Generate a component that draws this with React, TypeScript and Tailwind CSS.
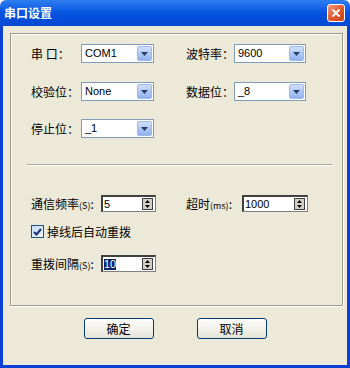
import React from 'react';

const font = "font-['SimSun','Noto_Sans_CJK_SC',sans-serif]";

const DropArrow: React.FC = () => (
    <div className="w-[15px] h-[15px] rounded-[2px] border border-[#9fb8e8] bg-gradient-to-b from-[#cfe0fc] to-[#8fb2ef] flex items-center justify-center">
        <svg width="7" height="4" viewBox="0 0 7 4"><path d="M0 0h7L3.5 4z" fill="#2d3f66" /></svg>
    </div>
);

const Combo: React.FC<{ value: string, width: string }> = ({ value, width }) => (
    <div className={`${width} h-[19px] bg-white border border-[#7f9db9] flex items-center justify-between pl-[3px] pr-[1px]`}>
        <span className="text-[11px] font-['Liberation_Sans',sans-serif] text-black leading-none">{value}</span>
        <DropArrow />
    </div>
);

const Spin: React.FC<{ value: string, width: string, selected?: boolean }> = ({ value, width, selected }) => (
    <div className={`${width} h-[17px] bg-white border-t-[2px] border-l-[2px] border-b border-r border-t-[#404040] border-l-[#404040] border-b-[#808080] border-r-[#808080] flex items-center justify-between pl-[1px] pr-[2px]`}>
        <span className={`text-[11px] font-['Liberation_Sans',sans-serif] leading-none ${selected ? 'bg-[#0a246a] text-white' : 'text-black'}`}>{value}</span>
        <div className="w-[11px] h-[12px] border border-[#404040] bg-[#d4d0c8] flex flex-col items-center justify-center gap-[2px]">
            <svg width="5" height="3" viewBox="0 0 5 3"><path d="M2.5 0L5 3H0z" fill="#000" /></svg>
            <svg width="5" height="3" viewBox="0 0 5 3"><path d="M0 0h5L2.5 3z" fill="#000" /></svg>
        </div>
    </div>
);

const Label: React.FC<{ children: React.ReactNode, width: string }> = ({ children, width }) => (
    <span className={`${width} text-[12px] text-black leading-none`}>{children}</span>
);

const XpButton: React.FC<{ children: React.ReactNode }> = ({ children }) => (
    <button className="w-[70px] h-[21px] rounded-[3px] border border-[#003c74] bg-gradient-to-b from-white to-[#e6e3d6] text-[12px] text-black leading-none flex items-center justify-center">
        {children}
    </button>
);

const App: React.FC = () => {
    return (
        <div className={`w-[350px] h-[368px] flex flex-col ${font}`}>
            <div className="h-[26px] bg-gradient-to-b from-[#2f7ef0] via-[#0553e0] to-[#0448d2] rounded-t-[6px] flex items-center justify-between pl-[4px] pr-[5px]">
                <span className="text-white text-[12px] font-bold leading-none">串口设置</span>
                <div className="w-[18px] h-[18px] rounded-[3px] border border-white bg-gradient-to-br from-[#f29a7c] via-[#e35b2c] to-[#c8421a] flex items-center justify-center">
                    <svg width="10" height="10" viewBox="0 0 10 10"><path d="M1.5 1.5L8.5 8.5M8.5 1.5L1.5 8.5" stroke="#fff" strokeWidth="2" /></svg>
                </div>
            </div>
            <div className="flex-1 bg-[#ece9d8] border-x-[3px] border-b-[3px] border-[#0b3fd6] flex flex-col">
                <div className="ml-[7px] mt-[7px] w-[333px] h-[273px] border border-[#9c9a8c] shadow-[inset_1px_1px_0_#fff,1px_1px_0_#fff] flex flex-col pl-[20px] pr-[10px]">
                    <div className="flex items-center mt-[10px] h-[19px]">
                        <Label width="w-[50px]">串 口：</Label>
                        <Combo value="COM1" width="w-[73px]" />
                        <Label width="w-[48px] ml-[32px]">波特率：</Label>
                        <Combo value="9600" width="w-[72px]" />
                    </div>
                    <div className="flex items-center mt-[19px] h-[19px]">
                        <Label width="w-[50px]">校验位：</Label>
                        <Combo value="None" width="w-[73px]" />
                        <Label width="w-[48px] ml-[32px]">数据位：</Label>
                        <Combo value="_8" width="w-[72px]" />
                    </div>
                    <div className="flex items-center mt-[18px] h-[19px]">
                        <Label width="w-[50px]">停止位：</Label>
                        <Combo value="_1" width="w-[73px]" />
                    </div>
                    <div className="mt-[26px] ml-[-4px] h-[2px] border-t border-t-[#aca899] border-b border-b-white" />
                    <div className="flex items-center mt-[29px] h-[17px]">
                        <Label width="w-[70px]">通信频率<span className="text-[9px]">(S)</span>:</Label>
                        <Spin value="5" width="w-[55px]" />
                        <Label width="w-[56px] ml-[30px]">超时<span className="text-[9px]">(ms)</span>:</Label>
                        <Spin value="1000" width="w-[66px]" />
                    </div>
                    <div className="flex items-center mt-[13px] h-[13px]">
                        <div className="w-[13px] h-[13px] border border-[#1c5180] bg-gradient-to-br from-[#c9dbf7] to-[#eef4fd] flex items-center justify-center">
                            <svg width="9" height="8" viewBox="0 0 9 8"><path d="M1 4l2.5 2.5L8 1" stroke="#13307a" strokeWidth="2" fill="none" /></svg>
                        </div>
                        <span className="ml-[3px] text-[12px] text-black leading-none">掉线后自动重拨</span>
                    </div>
                    <div className="flex items-center mt-[17px] h-[17px]">
                        <Label width="w-[70px]">重拨间隔<span className="text-[9px]">(S)</span>:</Label>
                        <Spin value="10" width="w-[55px]" selected />
                    </div>
                </div>
                <div className="flex justify-center gap-[43px] mt-[12px]">
                    <XpButton>确定</XpButton>
                    <XpButton>取消</XpButton>
                </div>
            </div>
        </div>
    );
};

export default App;
